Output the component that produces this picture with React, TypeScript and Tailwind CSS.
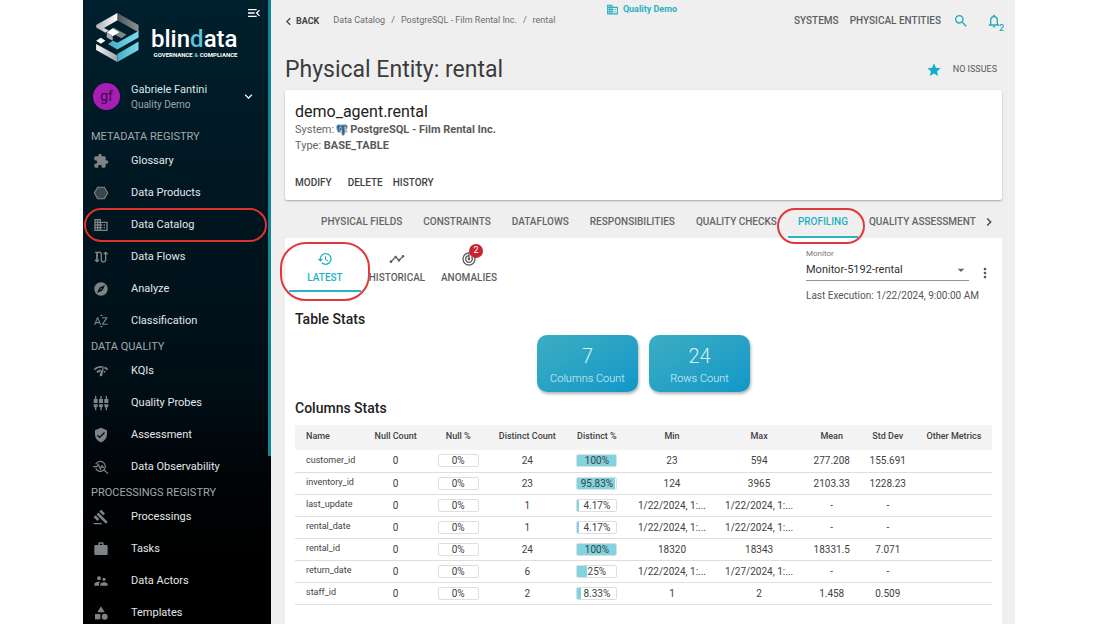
import React from "react";
import {
  MdArrowDropDown, MdCategory, MdChevronLeft, MdChevronRight, MdDomain, MdExpandMore, MdExplore,
  MdExtension, MdGavel, MdHistory, MdMenuOpen, MdMoreVert, MdNetworkCheck, MdNotificationsNone,
  MdSearch, MdSettingsInputComponent, MdSortByAlpha, MdStar, MdSupervisorAccount, MdTimeline,
  MdTrackChanges, MdVerifiedUser, MdWork,
} from "react-icons/md";
import { BiLogoPostgresql } from "react-icons/bi";

function HexagonIcon() {
  return (
    <svg viewBox="0 0 24 24" width="16" height="16" aria-hidden="true">
      <path d="M7 3.500h10l5 8.500-5 8.500H7L2 12z" fill="#3a464b" stroke="#808689" strokeWidth="1.6" />
    </svg>
  );
}

function FlowIcon() {
  return (
    <svg viewBox="0 0 24 24" width="16" height="16" fill="none" stroke="currentColor" strokeWidth="2" aria-hidden="true">
      <path d="M3 5h3v14M3 16l3 3 3-3" />
      <path d="M6 19V8a3 3 0 0 1 6.500 0v8a3 3 0 0 0 6.500 0V5" />
      <path d="M16 8l3-3 3 3" />
    </svg>
  );
}

function ObservabilityIcon() {
  return (
    <svg viewBox="0 0 24 24" width="16" height="16" fill="none" stroke="currentColor" strokeWidth="1.8" aria-hidden="true">
      <path d="M4 8a7.500 7.500 0 1 1 0 6M16.500 16.500L22.500 22" />
      <path d="M0 11.500h6l2-3.500 3 7 2.500-5 1.500 2.500h1.500" />
    </svg>
  );
}

function Logo() {
  return (
    <svg viewBox="0 0 129 148" width="43" height="49" className="shrink-0" aria-hidden="true">
      <defs>
        <linearGradient id="silver" x1="0" x2="1">
          <stop offset="0" stopColor="#a9afb2" />
          <stop offset="1" stopColor="#ffffff" />
        </linearGradient>
        <linearGradient id="base" x1="0" x2="1">
          <stop offset="0" stopColor="#f4f5f5" />
          <stop offset="1" stopColor="#9da4a8" />
        </linearGradient>
        <linearGradient id="steel" x1="0" x2="1">
          <stop offset="0" stopColor="#4d565c" />
          <stop offset="1" stopColor="#8d9296" />
        </linearGradient>
        <linearGradient id="aqua" x1="0" x2="1">
          <stop offset="0" stopColor="#3fb0c9" />
          <stop offset="1" stopColor="#7fd9ea" />
        </linearGradient>
      </defs>
      <path d="M64 0L128 36V58L64 22z" fill="url(#steel)" />
      <path d="M64 0V22L24 45 38 53 28 60 0 44V36z" fill="url(#silver)" />
      <path d="M52 44L92 66 76 76 50 62z" fill="#7b8489" />
      <path d="M32 58L50 46 70 58 50 70z" fill="#ffffff" />
      <path d="M32 58L50 70V84L32 74z" fill="#a5abae" />
      <path d="M128 54V74L64 110 36 94 50 84 64 90z" fill="url(#aqua)" />
      <path d="M0 84L14 75 28 84 14 93z" fill="#ffffff" />
      <path d="M0 94L64 128V148L0 112z" fill="url(#base)" />
      <path d="M128 86V112L64 148V124z" fill="url(#aqua)" />
    </svg>
  );
}

const sections = [
  {
    title: "METADATA REGISTRY",
    items: [
      { label: "Glossary", icon: <MdExtension /> },
      { label: "Data Products", icon: <HexagonIcon /> },
      { label: "Data Catalog", icon: <MdDomain />, marked: true },
      { label: "Data Flows", icon: <FlowIcon /> },
      { label: "Analyze", icon: <MdExplore /> },
      { label: "Classification", icon: <MdSortByAlpha /> },
    ],
  },
  {
    title: "DATA QUALITY",
    items: [
      { label: "KQIs", icon: <MdNetworkCheck /> },
      { label: "Quality Probes", icon: <MdSettingsInputComponent /> },
      { label: "Assessment", icon: <MdVerifiedUser /> },
      { label: "Data Observability", icon: <ObservabilityIcon /> },
    ],
  },
  {
    title: "PROCESSINGS REGISTRY",
    items: [
      { label: "Processings", icon: <MdGavel /> },
      { label: "Tasks", icon: <MdWork /> },
      { label: "Data Actors", icon: <MdSupervisorAccount /> },
      { label: "Templates", icon: <MdCategory /> },
    ],
  },
];

function Sidebar() {
  return (
    <aside className="flex w-[188px] shrink-0 overflow-hidden bg-linear-to-b from-[#00202d] via-[#000d14] via-65% to-black">
      <div className="min-w-0 flex-1">
        <div className="flex h-[127px] flex-col">
          <div className="flex h-[75px] items-start pt-[13px] pl-[13px]">
            <Logo />
            <div className="flex flex-col pt-3 pl-3">
              <span className="text-[24px] leading-7 font-medium text-white">
                blin<span className="text-[#5cc3dc]">d</span>ata
              </span>
              <span className="self-end text-[6px] leading-1 font-bold whitespace-nowrap text-white">
                GOVERNANCE <span className="text-[#5cc3dc]">&amp;</span> COMPLIANCE
              </span>
            </div>
            <button aria-label="Collapse menu" className="-mt-2 mr-[6px] ml-auto shrink-0 text-white">
              <MdMenuOpen className="size-4" />
            </button>
          </div>
          <button className="flex h-[43px] items-center pr-3 pl-[10px] text-left">
            <span className="flex size-[27px] items-center justify-center rounded-full bg-[#a81db4] text-[14px] text-[#3b0b45]">gf</span>
            <span className="flex flex-1 flex-col pl-[11px]">
              <span className="text-[11px] leading-4 text-[#dfe4e6]">Gabriele Fantini</span>
              <span className="text-[10px] leading-[14px] text-[#9ba5aa]">Quality Demo</span>
            </span>
            <MdExpandMore className="size-[15px] text-white" />
          </button>
        </div>
        <nav>
          {sections.map((s) => (
            <section key={s.title}>
              <h2 className="h-[18px] pl-2 text-[11px] leading-5 text-[#a2a8ab]">{s.title}</h2>
              {s.items.map((it) => (
                <a key={it.label} href="#" className="relative flex h-8 items-center pl-[10px] text-[11px] text-[#e4e7e8]">
                  <span className="w-[38px] text-[16px] text-[#808385]">{it.icon}</span>
                  {it.label}
                  {it.marked && <span className="absolute inset-x-px -inset-y-px rounded-full border-2 border-[#e0312d]" />}
                </a>
              ))}
            </section>
          ))}
        </nav>
      </div>
      <div className="h-[456px] w-[3px] bg-[#148597]" />
    </aside>
  );
}

const tabs = ["PHYSICAL FIELDS", "CONSTRAINTS", "DATAFLOWS", "RESPONSIBILITIES", "QUALITY CHECKS", "PROFILING", "QUALITY ASSESSMENT"];

const headers = ["Name", "Null Count", "Null %", "Distinct Count", "Distinct %", "Min", "Max", "Mean", "Std Dev", "Other Metrics"];

const rows = [
  ["customer_id", 24, 100, "23", "594", "277.208", "155.691"],
  ["inventory_id", 23, 95.83, "124", "3965", "2103.33", "1228.23"],
  ["last_update", 1, 4.17, "1/22/2024, 1:...", "1/22/2024, 1:...", "-", "-"],
  ["rental_date", 1, 4.17, "1/22/2024, 1:...", "1/22/2024, 1:...", "-", "-"],
  ["rental_id", 24, 100, "18320", "18343", "18331.5", "7.071"],
  ["return_date", 6, 25, "1/22/2024, 1:...", "1/27/2024, 1:...", "-", "-"],
  ["staff_id", 2, 8.33, "1", "2", "1.458", "0.509"],
] as const;

function Meter({ value }: { value: number }) {
  return (
    <div className="relative mx-auto h-[13px] w-[41px] overflow-hidden rounded-xs border border-[#dcdfe0]">
      <div className="absolute inset-y-0 left-0 bg-[#80d3e0]" style={{ width: `${value}%` }} />
      <span className="relative block leading-[11px]">{value}%</span>
    </div>
  );
}

function StatCard({ value, label }: { value: number; label: string }) {
  return (
    <div className="flex h-[57px] w-[101px] flex-col items-center rounded-[10px] bg-linear-to-br from-[#3badc1] to-[#0d98c8] pt-2 text-[#d8f2f8] shadow-[1px_2px_3px_rgba(0,0,0,0.3)]">
      <span className="text-[20px] leading-[26px] font-light">{value}</span>
      <span className="text-[11px] leading-5 font-light">{label}</span>
    </div>
  );
}

function SubTab({ icon, label, active, badge }: { icon: React.ReactNode; label: string; active?: boolean; badge?: number }) {
  return (
    <button
      className={
        active
          ? "relative flex h-[54px] w-[72px] flex-col items-center border-b-2 border-[#2bb2c6] pt-[13px] text-[#1fafc4]"
          : "relative flex h-[54px] w-[72px] flex-col items-center pt-[13px] text-[#5f5f5f]"
      }
    >
      <span className="relative text-[16px]">
        {icon}
        {badge && (
          <span className="absolute -top-[7px] left-2 flex size-[14px] items-center justify-center rounded-full bg-[#cb2334] text-[9px] text-white">
            {badge}
          </span>
        )}
      </span>
      <span className="text-[10px] leading-[22px] font-medium">{label}</span>
      {active && <span className="absolute -inset-x-[9px] top-[4px] -bottom-[11px] rounded-[26px] border-2 border-[#e0393a]" />}
    </button>
  );
}

function TopBar() {
  return (
    <header className="grid h-11 grid-cols-[1fr_auto_1fr] items-start">
      <div className="flex h-[42px] items-center text-[9px] text-[#6d6d6d]">
        <button className="flex items-center pt-px text-[9px] font-bold text-[#424242]">
          <MdChevronLeft className="-ml-1 size-[15px]" />
          BACK
        </button>
        <nav aria-label="Breadcrumb" className="flex gap-[6px] pl-[14px] whitespace-nowrap">
          <a href="#">Data Catalog</a>
          <span>/</span>
          <a href="#">PostgreSQL - Film Rental Inc.</a>
          <span>/</span>
          <a href="#">rental</a>
        </nav>
      </div>
      <div className="flex h-[19px] items-center gap-1 pr-1 text-[9px] font-bold text-[#2bb0c4]">
        <MdDomain className="size-[13px]" />
        Quality Demo
      </div>
      <div className="flex h-[41px] items-center justify-end text-[10px] font-medium whitespace-nowrap text-[#5f5f5f]">
        <a href="#" className="pr-[11px]">SYSTEMS</a>
        <a href="#" className="pr-3">PHYSICAL ENTITIES</a>
        <button aria-label="Search" className="text-[#20a9bd]"><MdSearch className="size-4" /></button>
        <button aria-label="Notifications" className="relative ml-[17px] text-[#20a9bd]">
          <MdNotificationsNone className="size-4" />
          <span className="absolute top-[9px] left-[13px] text-[9px] leading-3">2</span>
        </button>
      </div>
    </header>
  );
}

export default function App() {
  return (
    <div className="flex h-screen overflow-hidden bg-white px-[83px] font-[Roboto,sans-serif] text-[#424242]">
      <Sidebar />
      <main className="min-w-0 flex-1 overflow-hidden bg-[#efefef] pr-[13px] pl-[14px]">
        <TopBar />
        <div className="flex h-[46px] items-center justify-between pt-[6px]">
          <h1 className="text-[23px] text-[#3c3c3c]">Physical Entity: rental</h1>
          <div className="flex items-center pr-[5px]">
            <button aria-label="Favourite" className="text-[#0fafc6]"><MdStar className="size-4" /></button>
            <span className="pl-[11px] text-[9px] text-[#5a5a5a]">NO ISSUES</span>
          </div>
        </div>
        <section className="flex h-[110px] flex-col rounded-xs bg-white px-[10px] pt-3 shadow-[0_1px_2px_rgba(0,0,0,0.3)]">
          <h2 className="text-[16px] leading-5 text-[#212121]">demo_agent.rental</h2>
          <p className="flex items-center text-[11px] leading-4 text-[#666]">
            System:
            <BiLogoPostgresql className="mx-px size-[14px] text-[#336791]" />
            <b className="text-[#5a5a5a]">PostgreSQL - Film Rental Inc.</b>
          </p>
          <p className="text-[11px] leading-4 text-[#666]">Type: <b className="text-[#5a5a5a]">BASE_TABLE</b></p>
          <div className="flex pt-[21px] text-[10px] leading-4 font-medium text-[#424242]">
            <button className="pr-4">MODIFY</button>
            <button className="pr-[10px]">DELETE</button>
            <button>HISTORY</button>
          </div>
        </section>
        <div role="tablist" className="flex h-[38px] items-stretch gap-px pl-[26px] text-[10px] font-medium whitespace-nowrap text-[#666]">
          {tabs.map((t) =>
            t === "PROFILING" ? (
              <button key={t} role="tab" aria-selected="true" className="relative border-b-2 border-[#2bb2c6] px-[10px] pt-[6px] text-[#1fafc4]">
                {t}
                <span className="absolute top-[8px] right-[-7px] -bottom-[8px] left-[-11px] rounded-[18px] border-2 border-[#e0393a]" />
              </button>
            ) : (
              <button key={t} role="tab" aria-selected="false" className="px-[10px] pt-1">{t}</button>
            ),
          )}
          <button aria-label="More tabs" className="-ml-[6px] pt-[5px] text-[#424242]"><MdChevronRight className="size-4" /></button>
        </div>
        <section className="min-h-[400px] rounded-xs bg-white">
          <div className="flex items-start justify-between pl-1">
            <div className="flex">
              <SubTab icon={<MdHistory />} label="LATEST" active />
              <SubTab icon={<MdTimeline />} label="HISTORICAL" />
              <SubTab icon={<MdTrackChanges />} label="ANOMALIES" badge={2} />
            </div>
            <div className="flex pt-[10px] pr-[9px]">
              <div className="flex w-[171px] flex-col">
                <label htmlFor="monitor" className="text-[8px] leading-3 text-[#777]">Monitor</label>
                <div className="relative mr-2 flex h-[21px] items-center border-b border-[#949494]">
                  <select id="monitor" className="w-full appearance-none bg-transparent text-[11px] text-[#333]">
                    <option>Monitor-5192-rental</option>
                  </select>
                  <MdArrowDropDown className="pointer-events-none absolute right-0 size-4 text-[#666]" />
                </div>
                <p className="pt-[7px] text-[10px] leading-4 whitespace-nowrap text-[#555]">Last Execution: 1/22/2024, 9:00:00 AM</p>
              </div>
              <button aria-label="More options" className="mt-[17px] h-4 text-[#555]"><MdMoreVert className="size-4" /></button>
            </div>
          </div>
          <div className="px-[10px]">
            <h3 className="pt-[5px] text-[14px] leading-5 font-medium text-[#212121]">Table Stats</h3>
            <div className="flex justify-center gap-[11px] pt-[6px]">
              <StatCard value={7} label="Columns Count" />
              <StatCard value={24} label="Rows Count" />
            </div>
            <h3 className="pt-[6px] pb-[7px] text-[14px] leading-5 font-medium text-[#212121]">Columns Stats</h3>
            <table className="w-full table-fixed border-collapse text-center text-[10px] text-[#424242]">
              <colgroup>
                <col className="w-[70px]" />
                <col className="w-[61px]" />
                <col className="w-[64px]" />
                <col className="w-[74px]" />
                <col className="w-[65px]" />
                <col className="w-[85px]" />
                <col className="w-[89px]" />
                <col className="w-[56px]" />
                <col className="w-[56px]" />
                <col className="w-[76px]" />
              </colgroup>
              <thead>
                <tr className="h-[25px] bg-[#f4f4f4] text-[9px] whitespace-nowrap">
                  {headers.map((h) => (
                    <th key={h} className="pb-px font-medium first:pl-[11px] first:text-left">{h}</th>
                  ))}
                </tr>
              </thead>
              <tbody>
                {rows.map((r) => (
                  <tr key={r[0]} className="h-[22px] border-b border-[#dedede] whitespace-nowrap">
                    <td className="pl-[11px] text-left text-[9px]">{r[0]}</td>
                    <td>0</td>
                    <td><Meter value={0} /></td>
                    <td>{r[1]}</td>
                    <td><Meter value={r[2]} /></td>
                    <td>{r[3]}</td>
                    <td>{r[4]}</td>
                    <td>{r[5]}</td>
                    <td>{r[6]}</td>
                    <td />
                  </tr>
                ))}
              </tbody>
            </table>
          </div>
        </section>
      </main>
    </div>
  );
}
